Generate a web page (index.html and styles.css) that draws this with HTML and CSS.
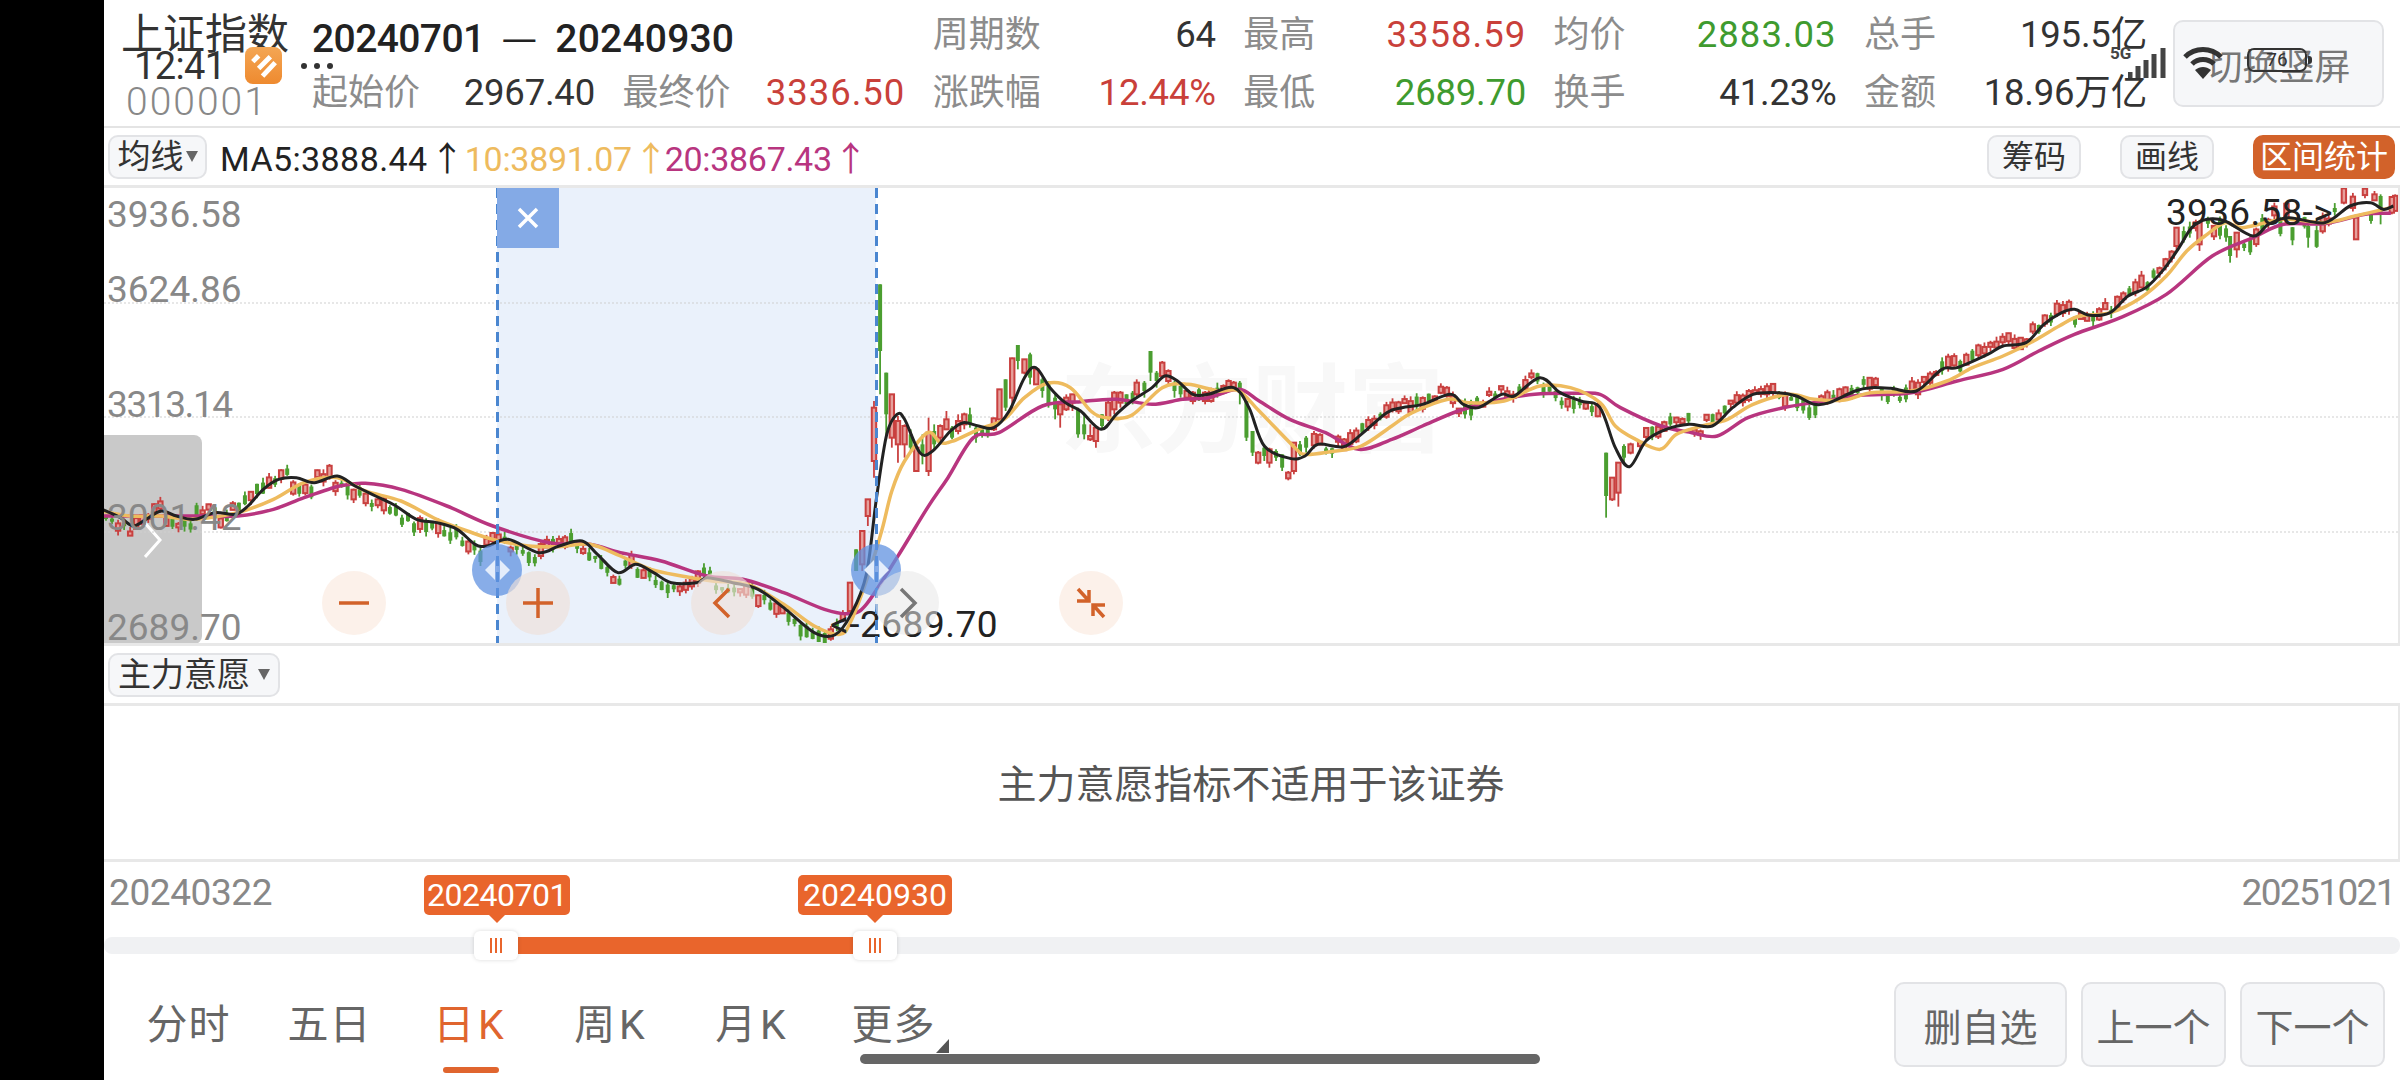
FILE: index.html
```html
<!DOCTYPE html>
<html lang="zh-CN">
<head>
    <meta charset="UTF-8">
    <title>上证指数 区间统计</title>
    <link rel="stylesheet" href="styles.css">
</head>
<body>
    <div class="blackbar"></div>
    <div class="app">
        <div class="statusbar">
            <div class="status-left">
                <span class="clock">12:41</span>
                <svg class="app-icon" viewBox="0 0 38 38">
                    <defs>
                        <linearGradient id="iconfill" x1="0" y1="0" x2="0" y2="1">
                            <stop offset="0" stop-color="#f4a654"/>
                            <stop offset="1" stop-color="#ee8a2f"/>
                        </linearGradient>
                    </defs>
                    <rect width="38" height="38" rx="8" fill="url(#iconfill)"/>
                    <path d="M8 15 L14 9 M14 22 L26 10 M18 30 L31 16" stroke="#fff" stroke-width="5" fill="none"/>
                </svg>
                <span class="dots"><i></i><i></i><i></i></span>
            </div>
            <div class="status-right">
                <span class="net">5G</span>
                <svg class="signal" viewBox="0 0 40 30">
                    <path d="M2 30V24M10 30V18M18 30V12M26 30V6M35 30V0" stroke="#444" stroke-width="5"/>
                </svg>
                <svg class="wifi" viewBox="0 0 40 35">
                    <path d="M2 12C12 2 28 2 38 12M9 19C15 13 25 13 31 19" stroke="#333" stroke-width="5" fill="none"/>
                    <path d="M20 34L12 25C17 21 23 21 28 25Z" fill="#333"/>
                </svg>
                <span class="battery">76</span>
            </div>
        </div>

        <header class="topbar">
            <div class="stock">
                <div class="stock-name">上证指数</div>
                <div class="stock-code">000001</div>
            </div>
            <div class="stats">
                <div class="range">20240701<span class="range-dash">—</span><span class="range-end">20240930</span></div>
                <div class="stat"><span class="stat-label">周期数</span><span>64</span></div>
                <div class="stat"><span class="stat-label">最高</span><span class="up wide">3358.59</span></div>
                <div class="stat"><span class="stat-label">均价</span><span class="down wide">2883.03</span></div>
                <div class="stat"><span class="stat-label">总手</span><span>195.5亿</span></div>
                <div class="stat"><span class="stat-label">起始价</span><span>2967.40</span></div>
                <div class="stat"><span class="stat-label">最终价</span><span class="up wide">3336.50</span></div>
                <div class="stat"><span class="stat-label">涨跌幅</span><span class="up">12.44%</span></div>
                <div class="stat"><span class="stat-label">最低</span><span class="down">2689.70</span></div>
                <div class="stat"><span class="stat-label">换手</span><span>41.23%</span></div>
                <div class="stat"><span class="stat-label">金额</span><span>18.96万亿</span></div>
            </div>
            <button class="btn btn-screen">切换竖屏</button>
        </header>

        <div class="toolbar">
            <button class="btn btn-small btn-select">均线<i class="caret"></i></button>
            <div class="ma-legend">
                <span class="ma5">MA5:3888.44 ↑</span>
                <span class="ma10">10:3891.07 ↑</span>
                <span class="ma20">20:3867.43 ↑</span>
            </div>
            <div class="tools">
                <button class="btn btn-small">筹码</button>
                <button class="btn btn-small">画线</button>
                <button class="btn btn-small btn-active">区间统计</button>
            </div>
        </div>

        <div class="chart">
            <div class="watermark">东方财富</div>
            <div class="pull-tab">
                <svg class="pull-chevron" viewBox="0 0 18 36"><path d="M1 1L16 18L1 35" stroke="#fff" stroke-width="3" fill="none"/></svg>
            </div>
            <div class="selection"></div>
            <svg id="kline" class="kline" viewBox="104 187 2296 458"></svg>

            <span class="axis axis-1">3936.58</span>
            <span class="axis axis-2">3624.86</span>
            <span class="axis axis-3">3313.14</span>
            <span class="axis axis-4">3001.42</span>
            <span class="axis axis-5">2689.70</span>
            <span class="peak peak-high">3936.58-&gt;</span>
            <span class="peak peak-low">&lt;-2689.70</span>

            <div class="sel-line sel-line-a"></div>
            <div class="sel-line sel-line-b"></div>
            <div class="sel-close">
                <svg viewBox="0 0 24 24"><path d="M3 3L21 21M21 3L3 21" stroke="#fff" stroke-width="3.5"/></svg>
            </div>
            <div class="sel-handle sel-handle-a"><i></i><i></i></div>
            <div class="sel-handle sel-handle-b"><i></i><i></i></div>

            <div class="zoom-controls">
                <div class="round">
                    <svg viewBox="0 0 32 32"><path d="M1 16H31" stroke="#d2622a" stroke-width="3.5"/></svg>
                </div>
                <div class="round round-over">
                    <svg viewBox="0 0 32 32"><path d="M1 16H31M16 1V31" stroke="#d2622a" stroke-width="3.5"/></svg>
                </div>
                <div class="round round-over">
                    <svg viewBox="0 0 32 32"><path d="M22 2L8 16L22 30" stroke="#d2622a" stroke-width="3.5" fill="none"/></svg>
                </div>
                <div class="round round-off">
                    <svg viewBox="0 0 32 32"><path d="M10 2L24 16L10 30" stroke="#777" stroke-width="3.5" fill="none"/></svg>
                </div>
                <div class="round">
                    <svg viewBox="0 0 32 32"><path d="M3 2L14 14M14 3V14H2M29 30L18 18M18 29V18H30" stroke="#d2622a" stroke-width="3.5" fill="none"/></svg>
                </div>
            </div>
        </div>

        <div class="toolbar toolbar-sub">
            <button class="btn btn-small btn-select">主力意愿<i class="caret"></i></button>
        </div>

        <div class="subpanel">主力意愿指标不适用于该证券</div>

        <div class="slider">
            <div class="slider-dates">
                <span>20240322</span>
                <span class="date-end">20251021</span>
            </div>
            <div class="slider-tag slider-tag-a">20240701</div>
            <div class="slider-tag slider-tag-b">20240930</div>
            <div class="track">
                <div class="track-fill"></div>
                <div class="thumb thumb-a"><i></i><i></i><i></i></div>
                <div class="thumb thumb-b"><i></i><i></i><i></i></div>
            </div>
        </div>

        <footer class="bottombar">
            <nav class="tabs">
                <a class="tab">分时</a>
                <a class="tab">五日</a>
                <a class="tab tab-k tab-active">日K</a>
                <a class="tab tab-k">周K</a>
                <a class="tab tab-k">月K</a>
                <a class="tab">更多<i class="more-mark"></i></a>
            </nav>
            <div class="actions">
                <button class="btn btn-action btn-wide">删自选</button>
                <button class="btn btn-action">上一个</button>
                <button class="btn btn-action">下一个</button>
            </div>
            <div class="nav-pill"></div>
        </footer>
    </div>
    <script src="chart.js"></script>
</body>
</html>
```

FILE: styles.css
```css
* {
    box-sizing: border-box;
}
html, body {
    margin: 0;
    height: 1080px;
    overflow: hidden;
}
body {
    display: flex;
    background-color: #fff;
    color: #333;
    font-family: Roboto, "Noto Sans CJK SC", sans-serif;
}
button {
    font-family: inherit;
}
i {
    font-style: normal;
}
.blackbar {
    width: 104px;
    background-color: #000;
}
.app {
    position: relative;
    width: 2296px;
    display: flex;
    flex-direction: column;
}

/* system status bar, it lies over the page */
.statusbar {
    position: absolute;
    top: 0;
    left: 0;
    right: 0;
    z-index: 5;
}
.status-left {
    position: absolute;
    left: 30px;
    top: 47px;
    display: flex;
    align-items: center;
}
.clock {
    font-size: 38px;
    letter-spacing: -0.6px;
    line-height: 36px;
    color: #333;
}
.app-icon {
    width: 37px;
    height: 37px;
    margin-left: 19px;
}
.dots {
    display: flex;
    gap: 7px;
    margin-left: 19px;
}
.dots i {
    width: 6px;
    height: 6px;
    border-radius: 50%;
    background-color: #333;
}
.status-right {
    position: absolute;
    left: 2006px;
    top: 44px;
    display: flex;
    align-items: flex-start;
}
.net {
    width: 24px;
    font-size: 17px;
    font-weight: 700;
    line-height: 18px;
    color: #444;
}
.signal {
    width: 40px;
    height: 30px;
    margin: 4px 0 0 -6px;
}
.wifi {
    width: 40px;
    height: 35px;
    margin: 1px 0 0 15px;
}
.battery {
    position: relative;
    width: 60px;
    height: 24px;
    margin: 4px 0 0 24px;
    border: 2px solid #333;
    border-radius: 7px;
    font-size: 19px;
    line-height: 20px;
    text-align: center;
    color: #333;
}
.battery::after {
    content: "";
    position: absolute;
    right: -7px;
    top: 6px;
    width: 4px;
    height: 8px;
    border-radius: 0 3px 3px 0;
    background-color: #333;
}

/* top block with the range stats */
.topbar {
    position: relative;
    height: 128px;
    display: flex;
    border-bottom: 2px solid #e4e4e4;
}
.stock {
    width: 208px;
    padding: 11px 0 0 17px;
}
.stock-name {
    font-size: 42px;
    line-height: 48px;
    color: #333;
}
.stock-code {
    margin: 20px 0 0 5px;
    font-size: 39px;
    line-height: 46px;
    letter-spacing: 2px;
    color: #888;
    font-weight: 300;
}
.stats {
    width: 1835px;
    display: grid;
    grid-template-columns: repeat(6, 283px);
    grid-auto-rows: 58px;
    column-gap: 27.4px;
    padding-top: 6px;
    font-size: 36px;
    line-height: 58px;
}
.range {
    grid-column: span 2;
    font-size: 39px;
    font-weight: 500;
    color: #222;
    letter-spacing: -0.6px;
}
.range-dash {
    margin: 0 18px 0 17px;
    font-family: "Noto Sans CJK SC", sans-serif;
    font-size: 40px;
    font-weight: 400;
    letter-spacing: 0;
}
.range-end {
    letter-spacing: 0.2px;
}
.stat {
    display: flex;
    justify-content: space-between;
    letter-spacing: -0.2px;
    font-size: 36.5px;
    color: #333;
}
.stat-label {
    font-size: 36px;
    letter-spacing: 0;
    color: #8c8c8c;
}
.up {
    color: #c9403a;
}
.down {
    color: #3f9b2f;
}
.wide {
    letter-spacing: 1px;
}

/* buttons */
.btn {
    background-color: #f6f7f9;
    border: 2px solid #e2e3e6;
    border-radius: 10px;
    padding: 0;
    color: #333;
}
.btn-screen {
    width: 211px;
    height: 87px;
    margin: 20px 0 0 26px;
    font-size: 36px;
    color: #777;
}
.btn-small {
    height: 44px;
    width: 94px;
    font-size: 32px;
    line-height: 40px;
}
.btn-select {
    width: 99px;
    display: flex;
    align-items: center;
    justify-content: center;
    gap: 2px;
    font-size: 33px;
}
.btn-active {
    width: 142px;
    background-color: #d2622a;
    border-color: #d2622a;
    color: #fff;
}
.caret {
    width: 0;
    height: 0;
    border: 6px solid transparent;
    border-top: 11px solid #666;
    border-bottom: 0;
}

/* indicator toolbars */
.toolbar {
    height: 60px;
    display: flex;
    align-items: center;
    padding: 0 5px 0 4px;
    border-bottom: 3px solid #e8e8e8;
}
.toolbar-sub .btn-select {
    width: 172px;
    gap: 8px;
}
.ma-legend {
    display: flex;
    margin-left: 13px;
    font-size: 34px;
    letter-spacing: -0.3px;
    word-spacing: -6px;
    white-space: nowrap;
}
.ma5 {
    letter-spacing: 0.4px;
    color: #222;
}
.ma10 {
    color: #eebb5e;
}
.ma20 {
    margin-left: -3px;
    color: #b8357f;
}
.tools {
    display: flex;
    gap: 39px;
    margin-left: auto;
}

/* k line chart */
.chart {
    position: relative;
    height: 458px;
    overflow: hidden;
    border-right: 2px solid #e8e8e8;
    border-bottom: 3px solid #e8e8e8;
}
.kline {
    position: absolute;
    inset: 0;
    width: 2296px;
    height: 458px;
}
.watermark {
    position: absolute;
    left: 956px;
    top: 168px;
    font-size: 96px;
    line-height: 110px;
    font-weight: 700;
    color: #f8f8f8;
    white-space: nowrap;
}
.pull-tab {
    position: absolute;
    left: 0;
    top: 247px;
    width: 98px;
    height: 209px;
    display: flex;
    align-items: center;
    justify-content: center;
    background-color: #c9c9c9;
    border-radius: 0 8px 8px 0;
}
.pull-chevron {
    width: 18px;
    height: 36px;
}
.selection {
    position: absolute;
    left: 393px;
    top: 0;
    width: 379px;
    height: 100%;
    background-color: #eaf1fb;
}
.axis {
    position: absolute;
    left: 3px;
    font-size: 37px;
    line-height: 40px;
    letter-spacing: 0;
    color: #888;
}
.axis-1 { top: 7px; }
.axis-2 { top: 82px; }
.axis-3 { top: 197px; letter-spacing: -1.4px; }
.axis-4 { top: 310px; }
.axis-5 { top: 420px; }
.peak {
    position: absolute;
    font-size: 37px;
    line-height: 40px;
    color: #222;
    white-space: nowrap;
}
.peak-high {
    left: 2062px;
    top: 5px;
    letter-spacing: 0.3px;
}
.peak-low {
    left: 726px;
    top: 417px;
    letter-spacing: 0.5px;
}
.sel-line {
    position: absolute;
    top: 0;
    bottom: 0;
    width: 3px;
    background-image: linear-gradient(#4a86d0 10px, transparent 10px);
    background-size: 3px 16px;
}
.sel-line-a { left: 392px; }
.sel-line-b { left: 771px; }
.sel-close {
    position: absolute;
    left: 393px;
    top: 0;
    width: 62px;
    height: 60px;
    display: flex;
    align-items: center;
    justify-content: center;
    background-color: #84aae6;
}
.sel-close svg {
    width: 24px;
    height: 24px;
}
.sel-handle {
    position: absolute;
    top: 356px;
    width: 50px;
    height: 52px;
    display: flex;
    align-items: center;
    justify-content: center;
    gap: 5px;
    border-radius: 50%;
    background-color: rgba(96, 146, 224, 0.75);
}
.sel-handle-a { left: 368px; }
.sel-handle-b { left: 747px; }
.sel-handle i {
    width: 0;
    height: 0;
    border-top: 10px solid transparent;
    border-bottom: 10px solid transparent;
}
.sel-handle i:first-child {
    border-right: 10px solid #e4edfb;
}
.sel-handle i:last-child {
    border-left: 10px solid #e4edfb;
}
.zoom-controls {
    position: absolute;
    left: 218px;
    top: 383px;
    display: flex;
    gap: 120.3px;
}
.round {
    width: 64px;
    height: 64px;
    display: flex;
    align-items: center;
    justify-content: center;
    border-radius: 50%;
    background-color: rgba(250, 228, 214, 0.5);
}
.round svg {
    width: 32px;
    height: 32px;
}
.round-over {
    background-color: rgba(238, 224, 216, 0.65);
}
.round-off {
    background-color: rgba(232, 232, 232, 0.55);
}

/* second indicator panel */
.subpanel {
    height: 156px;
    display: flex;
    align-items: center;
    justify-content: center;
    padding: 0 0 4px 0;
    border-bottom: 3px solid #e8e8e8;
    border-right: 2px solid #e8e8e8;
    font-size: 39px;
    color: #555;
}

/* date range slider */
.slider {
    position: relative;
    height: 92px;
}
.slider-dates {
    display: flex;
    justify-content: space-between;
    padding: 9px 5px 0 5px;
    font-size: 37px;
    line-height: 44px;
    letter-spacing: -0.4px;
    color: #888;
}
.date-end {
    letter-spacing: -1.6px;
}
.slider-tag {
    position: absolute;
    top: 13px;
    width: 146px;
    height: 40px;
    border-radius: 5px;
    background-color: #e9652c;
    color: #fff;
    font-size: 32px;
    line-height: 40px;
    letter-spacing: -0.5px;
    text-align: center;
}
.slider-tag::after {
    content: "";
    position: absolute;
    left: 50%;
    top: 100%;
    margin-left: -8px;
    border: 8px solid transparent;
    border-top-color: #e9652c;
    border-bottom: 0;
}
.slider-tag-a { left: 320px; }
.slider-tag-b { left: 694px; width: 154px; letter-spacing: 0; }
.track {
    position: absolute;
    left: 0;
    right: 0;
    top: 75px;
    height: 17px;
    border-radius: 8px;
    background-color: #f0f1f3;
}
.track-fill {
    position: absolute;
    left: 414px;
    top: 0;
    width: 335px;
    height: 17px;
    background-color: #e9652c;
}
.thumb {
    position: absolute;
    top: -6px;
    width: 44px;
    height: 29px;
    display: flex;
    align-items: center;
    justify-content: center;
    gap: 3px;
    border-radius: 6px;
    background-color: #fff;
    box-shadow: 0 0 4px rgba(0, 0, 0, 0.15);
}
.thumb-a { left: 370px; }
.thumb-b { left: 749px; }
.thumb i {
    width: 2px;
    height: 15px;
    background-color: #e9652c;
}

/* tabs and actions */
.bottombar {
    position: relative;
    flex: 1;
    display: flex;
    justify-content: space-between;
}
.tabs {
    display: flex;
    padding-left: 14px;
}
.tab {
    position: relative;
    width: 141px;
    height: 119px;
    padding-top: 43px;
    font-size: 41px;
    line-height: 56px;
    letter-spacing: 1px;
    text-align: center;
    color: #666;
}
.tab-k {
    letter-spacing: 4px;
}
.tab-active {
    color: #e0652e;
}
.tab-active::after {
    content: "";
    position: absolute;
    left: 43px;
    bottom: 0;
    width: 56px;
    height: 6px;
    border-radius: 3px;
    background-color: #e0652e;
}
.more-mark {
    position: absolute;
    left: 113px;
    top: 85px;
    width: 0;
    height: 0;
    border-left: 13px solid transparent;
    border-bottom: 14px solid #555;
}
.actions {
    display: flex;
    gap: 14px;
    padding: 28px 15px 0 0;
}
.btn-action {
    width: 145px;
    height: 85px;
    font-size: 38px;
    color: #666;
}
.btn-wide {
    width: 173px;
}
.nav-pill {
    position: absolute;
    left: 756px;
    top: 100px;
    width: 680px;
    height: 10px;
    border-radius: 5px;
    background-color: #666;
}
```

FILE: chart.js
```js
// traced from the chart, each panel has its own left edge. x is 1.96 and y is 3 per px
const panel = (left, pts) => pts.map(([x, y]) => [left + x / 1.96, 180 + y / 3]);

const ma5 = [
    ...panel(100, [[4,985],[40,1010],[65,1035],[90,1015],[120,990],[150,1005],[185,1015],[225,995],[265,1000],[290,975],[320,925],[350,895],[385,890],[420,905],[465,885],[500,915],[540,945],[580,975],[620,1015],[660,1025],[700,1045],[735,1090],[760,1095],[800,1075],[860,1115],[900,1095],[945,1080],[975,1120],[1015,1175],[1050,1150],[1085,1175],[1120,1205],[1170,1205],[1190,1190],[1240,1205],[1290,1225],[1340,1280],[1400,1355],[1440,1362]]),
    ...panel(800, [[100,1300],[130,1180],[150,950],[170,760],[190,700],[205,715],[235,815],[260,810],[295,750],[320,725],[350,735],[380,740],[410,690],[440,590],[462,560],[490,620],[520,665],[550,690],[590,745],[620,700],[650,660],[690,620],[715,585],[740,600],[770,640],[800,640],[850,620],[880,680],[910,795],[960,832],[990,825],[1015,790],[1065,797],[1100,760],[1150,695],[1180,680],[1220,670],[1275,640],[1300,670],[1330,680],[1375,640],[1400,645],[1450,590],[1490,635],[1530,660]]),
    ...panel(1600, [[0,680],[30,800],[58,857],[90,780],[130,745],[175,730],[220,735],[260,680],[300,640],[350,635],[385,645],[420,670],[450,665],[500,630],[530,620],[570,622],[620,630],[670,565],[700,560],[760,520],[790,495],[835,485],[870,430],[905,395],[930,385],[960,403],[1000,395],[1035,345],[1070,320],[1105,265],[1135,200],[1160,140],[1190,115],[1225,120],[1280,165],[1310,130],[1350,110],[1420,125],[1470,75],[1510,65],[1535,85],[1555,75]])
];

const ma10 = [
    ...panel(100, [[4,990],[60,1005],[120,1005],[180,1015],[270,995],[340,955],[400,905],[465,890],[520,930],[590,960],[660,1015],[720,1050],[770,1075],[840,1095],[900,1097],[960,1090],[1020,1125],[1080,1165],[1140,1185],[1200,1200],[1270,1210],[1340,1270],[1400,1335],[1450,1360]]),
    ...panel(800, [[100,1320],[130,1200],[160,1050],[180,930],[205,840],[250,755],[275,785],[300,780],[350,745],[400,715],[440,650],[485,607],[530,620],[570,690],[600,710],[650,703],[710,620],[760,610],[820,630],[860,630],[900,690],[970,800],[990,820],[1040,812],[1100,795],[1160,735],[1200,695],[1270,655],[1310,665],[1380,660],[1450,615],[1510,620]]),
    ...panel(1600, [[0,665],[30,735],[70,775],[118,805],[150,760],[200,735],[250,715],[300,670],[370,640],[420,655],[480,657],[530,635],[610,630],[680,600],[730,560],[790,525],[850,480],[900,435],[940,405],[1000,395],[1060,350],[1110,285],[1150,210],[1190,160],[1225,125],[1260,140],[1340,115],[1420,125],[1480,105],[1550,80]])
];

const ma20 = [
    ...panel(100, [[4,1005],[100,1005],[200,1005],[270,1005],[340,985],[400,950],[470,915],[520,907],[590,925],[680,975],[770,1035],[880,1085],[960,1090],[1020,1115],[1100,1140],[1190,1185],[1260,1195],[1340,1235],[1420,1285],[1470,1298]]),
    ...panel(800, [[130,1270],[190,1130],[250,980],[290,890],[340,770],[390,755],[475,675],[550,662],[620,655],[690,670],[750,655],[800,650],[860,625],[900,660],[960,715],[1030,755],[1095,805],[1160,775],[1220,735],[1290,690],[1360,660],[1440,640],[1520,637]]),
    ...panel(1600, [[0,640],[40,680],[120,735],[180,755],[230,765],[290,710],[360,680],[440,660],[510,643],[610,635],[700,600],[790,565],[860,510],[930,460],[1020,410],[1110,340],[1200,225],[1280,170],[1340,130],[1420,128],[1500,100],[1550,97]])
];

// the candles one can pick out by eye: x, wick top, wick bottom, body top, body bottom, colour
const big = [
    ...[
        [98,1205,1300,1205,1290,'r'],[110,1105,1170,1105,1170,'g'],[122,1050,1170,1050,1150,'r'],[133,955,1035,955,1005,'r'],
        [145,660,890,680,840,'r'],[157,310,640,310,510,'g'],[169,575,775,575,700,'g'],[180,640,800,640,770,'r'],
        [192,705,845,720,790,'r'],[205,730,830,735,790,'r'],[217,745,815,760,800,'g'],[228,790,870,800,870,'r'],[240,760,850,790,820,'g'],
        [252,710,885,755,870,'r'],[263,730,810,750,790,'g'],[275,730,780,735,770,'r'],[287,690,745,715,745,'r'],[298,735,775,740,770,'g'],
        [310,700,760,720,750,'r'],[322,695,745,700,730,'r'],[333,680,740,700,730,'g'],[345,735,785,740,770,'g'],[357,735,770,745,765,'g'],
        [368,735,770,745,765,'g'],[380,710,750,712,745,'r'],[391,625,720,625,715,'r'],[403,595,690,595,680,'g'],[416,530,690,532,650,'r'],
        [427,492,565,492,540,'g'],[440,535,580,535,575,'r'],[451,515,610,520,590,'g'],[463,560,610,565,610,'r'],[475,590,650,595,630,'g'],
        [487,600,680,610,670,'g'],[500,640,715,650,685,'g'],[510,665,740,670,700,'r'],[522,640,690,650,685,'r'],[534,640,690,640,665,'r'],
        [545,680,770,685,760,'g'],[557,700,775,730,760,'g'],[569,730,780,765,775,'r'],[580,740,800,740,780,'r'],[592,700,745,700,735,'g'],
        [604,660,720,665,710,'r'],[616,630,700,635,685,'r'],[628,630,680,635,665,'r'],[640,640,675,640,670,'g'],[652,630,670,635,665,'g'],
        [660,595,650,605,640,'r'],[675,600,650,605,630,'g'],[687,510,600,510,575,'g'],[699,570,620,575,600,'g'],[710,540,590,545,585,'r'],
        [722,565,610,570,600,'r'],[734,600,650,605,630,'g'],[746,610,650,615,640,'g'],[758,625,655,630,650,'r'],[770,630,670,635,660,'r'],
        [782,620,660,625,650,'g'],[794,630,670,635,660,'r'],[806,620,665,625,660,'r'],[818,605,650,620,640,'g'],[830,610,640,615,635,'r'],
        [840,595,630,600,625,'r'],[850,600,625,605,620,'r'],[862,600,670,605,635,'g'],[875,660,780,660,770,'g'],[887,750,825,750,815,'g'],
        [898,810,850,815,845,'r'],[910,790,840,800,825,'g'],[920,800,860,805,845,'r'],[933,805,840,810,830,'g'],[945,820,870,820,860,'g'],
        [957,870,898,875,892,'r'],[968,785,880,785,870,'r'],[980,780,825,790,820,'g'],[992,765,815,770,800,'g']
    ].map(([x, ...c]) => [800 + x / 1.96, ...c.map((v) => (typeof v === 'number' ? 180 + v / 3 : v))]),
    ...[
        [12,815,1010,815,945,'g'],[24,890,960,890,955,'r'],[36,845,977,845,935,'r'],[47,790,850,795,830,'g'],[60,785,820,790,815,'r'],
        [1130,140,210,140,195,'r'],[1175,125,210,125,190,'r'],[1235,165,245,165,225,'g'],[1248,155,230,155,205,'r'],
        [1388,130,200,135,170,'g'],[1482,110,175,110,175,'r'],[1458,20,70,22,65,'r'],[1518,30,60,40,58,'r'],[1530,40,130,45,100,'g'],[1552,45,100,48,95,'r']
    ].map(([x, ...c]) => [1600 + x / 1.96, ...c.map((v) => (typeof v === 'number' ? 180 + v / 3 : v))])
];

// small seeded random, so the filler candles stay put between runs
let seed = 20240701;
function rnd() {
    seed = (seed * 16807) % 2147483647;
    return seed / 2147483647;
}

function yAt(line, x) {
    for (let i = 1; i < line.length; i++) {
        if (x <= line[i][0]) {
            const [x0, y0] = line[i - 1];
            const [x1, y1] = line[i];
            return y0 + (y1 - y0) * (x - x0) / (x1 - x0);
        }
    }
    return line[line.length - 1][1];
}

// catmull-rom through the traced points, the app draws its averages smooth
function smooth(line) {
    let d = `M${line[0][0]} ${line[0][1]}`;
    for (let i = 0; i < line.length - 1; i++) {
        const p0 = line[i - 1] || line[i];
        const p1 = line[i];
        const p2 = line[i + 1];
        const p3 = line[i + 2] || p2;
        const c1x = p1[0] + (p2[0] - p0[0]) / 6;
        const c1y = p1[1] + (p2[1] - p0[1]) / 6;
        const c2x = p2[0] - (p3[0] - p1[0]) / 6;
        const c2y = p2[1] - (p3[1] - p1[1]) / 6;
        d += ` C${c1x} ${c1y} ${c2x} ${c2y} ${p2[0]} ${p2[1]}`;
    }
    return d;
}

const NS = 'http://www.w3.org/2000/svg';
const svg = document.getElementById('kline');
const RED = '#c9403f';
const GREEN = '#4b9e30';

function add(name, attrs) {
    const el = document.createElementNS(NS, name);
    Object.keys(attrs).forEach((k) => el.setAttribute(k, attrs[k]));
    svg.appendChild(el);
}

function candle(x, top, bottom, bodyTop, bodyBottom, color) {
    add('line', { x1: x, x2: x, y1: top, y2: bottom, stroke: color, 'stroke-width': 1.8 });
    if (color === RED) {
        add('rect', { x: x - 2.2, y: bodyTop, width: 4.4, height: bodyBottom - bodyTop, fill: '#e6a09c', stroke: color, 'stroke-width': 2 });
    } else {
        add('rect', { x: x - 2, y: bodyTop, width: 4, height: bodyBottom - bodyTop, fill: color });
    }
}

// grid lines
[302, 416, 531].forEach((y) => {
    add('line', { x1: 104, x2: 2400, y1: y, y2: y, stroke: '#cfcfcf', 'stroke-width': 1, 'stroke-dasharray': '2 2' });
});

// filler candles sit along the ma5, above it when it rises and below when it falls
for (let i = 0; i < 380; i++) {
    const x = 106 + i * 6.04;
    if ((x > 845 && x < 1312) || (x > 1600 && x < 1635)) continue;
    if (big.some((b) => Math.abs(b[0] - x) < 3.1)) continue;
    const slope = yAt(ma5, x + 9) - yAt(ma5, x - 9);
    const rising = slope < 0;
    const spread = x > 2200 ? 20 : 9;
    const mid = yAt(ma5, x) + (rising ? -4 : 7) + (rnd() - 0.5) * spread;
    const h = 3 + rnd() * (x > 2200 ? 14 : 9);
    const color = rnd() < (rising ? 0.68 : 0.3) ? RED : GREEN;
    candle(x, mid - h / 2 - rnd() * 5, mid + h / 2 + rnd() * 5, mid - h / 2, mid + h / 2, color);
}
big.forEach(([x, top, bottom, bodyTop, bodyBottom, c]) => {
    candle(x, top, bottom, bodyTop, bodyBottom, c === 'r' ? RED : GREEN);
});

// moving averages
[[ma20, '#b8357f', 3.5], [ma10, '#eebb5e', 3.5], [ma5, '#222222', 3]].forEach(([line, color, width]) => {
    add('path', {
        d: smooth(line),
        fill: 'none',
        stroke: color,
        'stroke-width': width,
        'stroke-linejoin': 'round'
    });
});
```
